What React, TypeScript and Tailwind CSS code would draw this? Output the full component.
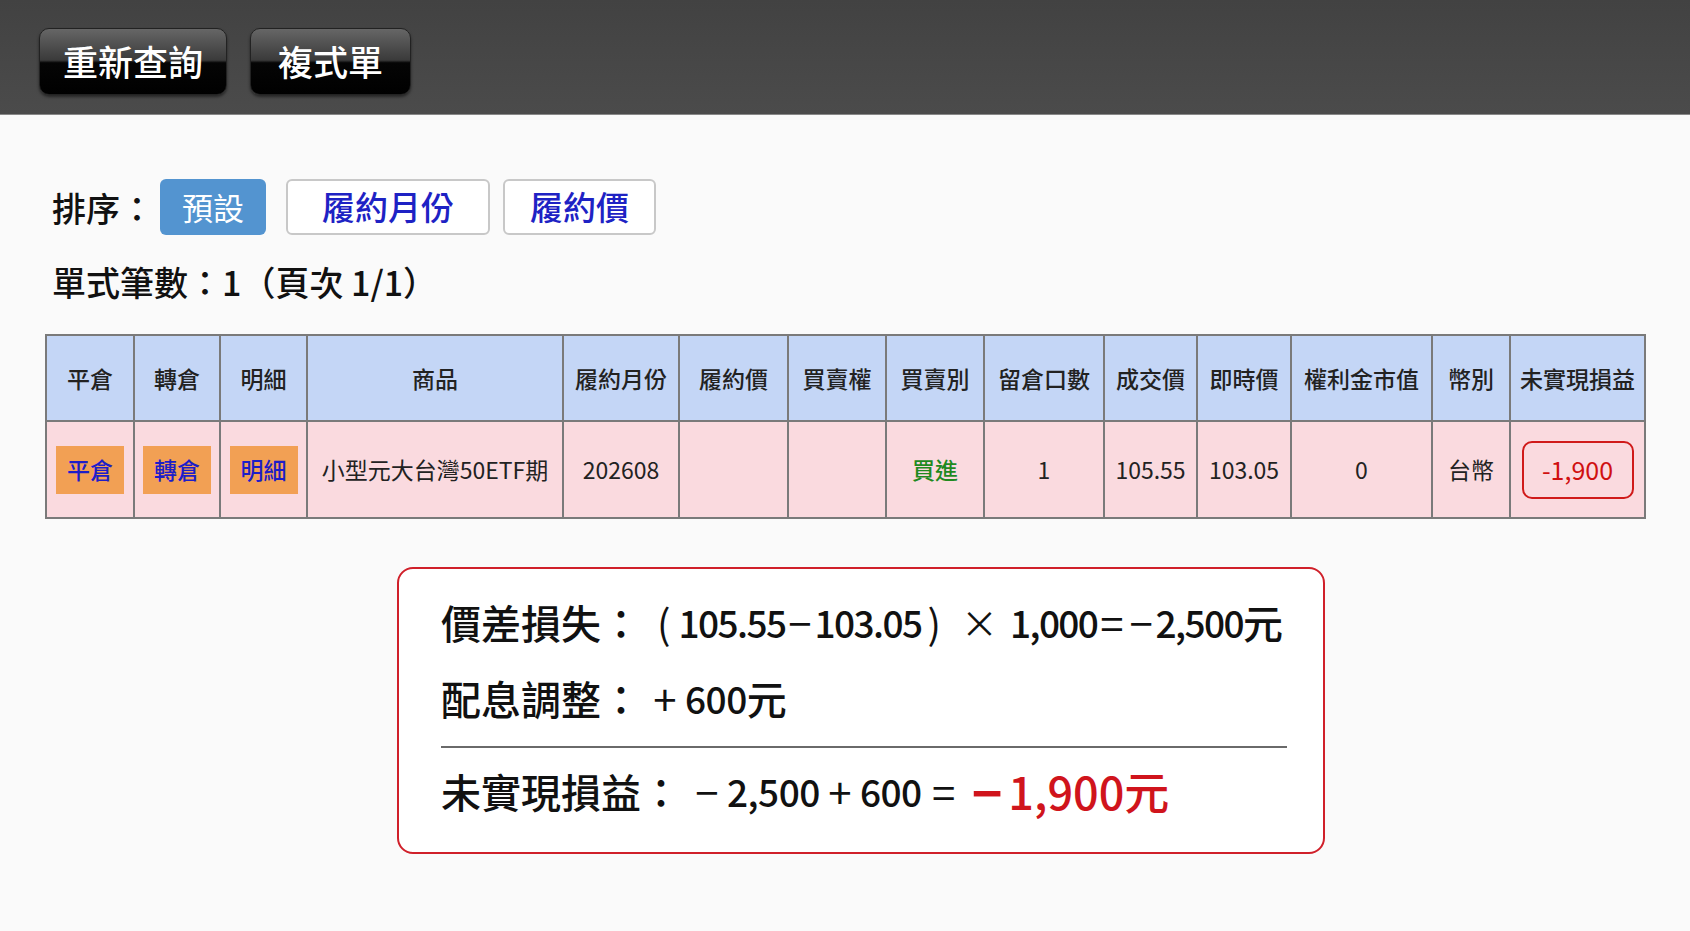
import React from "react";

const font = { fontFamily: '"Noto Sans CJK TC", "Noto Sans", sans-serif' };

const cols = [88, 86, 87, 256, 116, 109, 98, 98, 120, 93, 94, 141, 78, 135];
const heads = ["平倉", "轉倉", "明細", "商品", "履約月份", "履約價", "買賣權", "買賣別", "留倉口數", "成交價", "即時價", "權利金市值", "幣別", "未實現損益"];

function OrangeBtn({ t }: { t: string }) {
  return (
    <div className="mx-auto flex h-[48px] w-[68px] items-center justify-center bg-[#f2a054] text-[23px] font-medium text-[#1d1dc8]">
      {t}
    </div>
  );
}

function N({ children, tight }: { children: React.ReactNode; tight?: boolean }) {
  return <span className={tight ? "text-[37px] tracking-[-1.6px]" : "text-[37px] tracking-[-0.5px]"}>{children}</span>;
}

function Op({ children, w }: { children: React.ReactNode; w?: string }) {
  return <span className={"inline-flex justify-center text-[42px] font-normal " + (w ?? "w-[40px]")}>{children}</span>;
}

export default function App() {
  return (
    <div className="min-h-[931px] w-[1690px] bg-[#fafafa] text-[#111]" style={font}>
      <div className="flex h-[115px] items-start gap-[23px] border-b border-[#888] bg-gradient-to-b from-[#424242] to-[#4b4b4b] pl-[39px] pt-[28px]">
        <div className="flex h-[67px] w-[188px] items-center justify-center rounded-[10px] border border-[#222] bg-[linear-gradient(to_bottom,#666_0%,#3a3a3a_48%,#050505_52%,#000_100%)] text-[35px] font-medium text-white shadow-[0_2px_3px_rgba(0,0,0,0.5)]">
          重新查詢
        </div>
        <div className="flex h-[67px] w-[161px] items-center justify-center rounded-[10px] border border-[#222] bg-[linear-gradient(to_bottom,#666_0%,#3a3a3a_48%,#050505_52%,#000_100%)] text-[35px] font-medium text-white shadow-[0_2px_3px_rgba(0,0,0,0.5)]">
          複式單
        </div>
      </div>

      <div className="pl-[52px] pt-[64px]">
        <div className="flex h-[56px] items-center">
          <span className="w-[108px] text-[34px] font-medium">排序：</span>
          <div className="flex h-[56px] w-[106px] items-center justify-center rounded-[6px] bg-[#5394d0] text-[31px] text-white">預設</div>
          <div className="ml-[20px] flex h-[56px] w-[204px] items-center justify-center rounded-[6px] border-2 border-[#c8c8c8] bg-white text-[33px] font-medium text-[#1e22c4]">履約月份</div>
          <div className="ml-[13px] flex h-[56px] w-[153px] items-center justify-center rounded-[6px] border-2 border-[#c8c8c8] bg-white text-[33px] font-medium text-[#1e22c4]">履約價</div>
        </div>
        <div className="mt-[27px] h-[40px] whitespace-nowrap text-[34px] font-medium leading-[40px]">單式筆數：1（頁次 1/1）</div>
      </div>

      <div className="ml-[45px] mt-[32px]">
        <table className="border-collapse text-[23px]" style={{ width: 1599, tableLayout: "fixed" }}>
          <colgroup>
            {cols.map((w, i) => (
              <col key={i} style={{ width: w }} />
            ))}
          </colgroup>
          <thead>
            <tr className="h-[86px] bg-[#c4d6f6]">
              {heads.map((h) => (
                <th key={h} className="border-2 border-[#7a7a7a] p-0 text-center font-medium text-[#222]">
                  {h}
                </th>
              ))}
            </tr>
          </thead>
          <tbody>
            <tr className="h-[97px] bg-[#fadadf] text-[#222]">
              <td className="border-2 border-[#7a7a7a] p-0"><OrangeBtn t="平倉" /></td>
              <td className="border-2 border-[#7a7a7a] p-0"><OrangeBtn t="轉倉" /></td>
              <td className="border-2 border-[#7a7a7a] p-0"><OrangeBtn t="明細" /></td>
              <td className="border-2 border-[#7a7a7a] p-0 text-center">小型元大台灣50ETF期</td>
              <td className="border-2 border-[#7a7a7a] p-0 text-center">202608</td>
              <td className="border-2 border-[#7a7a7a] p-0"></td>
              <td className="border-2 border-[#7a7a7a] p-0"></td>
              <td className="border-2 border-[#7a7a7a] p-0 text-center font-medium text-[#1f8a1f]">買進</td>
              <td className="border-2 border-[#7a7a7a] p-0 text-center">1</td>
              <td className="border-2 border-[#7a7a7a] p-0 text-center">105.55</td>
              <td className="border-2 border-[#7a7a7a] p-0 text-center">103.05</td>
              <td className="border-2 border-[#7a7a7a] p-0 text-center">0</td>
              <td className="border-2 border-[#7a7a7a] p-0 text-center">台幣</td>
              <td className="border-2 border-[#7a7a7a] p-0">
                <div className="mx-auto flex h-[58px] w-[112px] items-center justify-center rounded-[10px] border-2 border-[#d01a1a] text-[25px] text-[#d01010]">
                  -1,900
                </div>
              </td>
            </tr>
          </tbody>
        </table>
      </div>

      <div className="ml-[397px] mt-[48px] w-[928px] rounded-[16px] border-2 border-[#d0202a] bg-white pb-[33px] pl-[42px] pr-[40px] pt-[29px] font-medium">
        <div className="flex h-[48px] items-center whitespace-nowrap text-[40px] leading-[48px]">
          <span>價差損失：</span>
          <span className="ml-[16px] mr-[8px] text-[40px] font-normal">(</span>
          <N tight>105.55</N>
          <Op>−</Op>
          <N tight>103.05</N>
          <span className="ml-[6px] mr-[20px] text-[40px] font-normal">)</span>
          <span className="mr-[12px] text-[37px] font-normal">×</span>
          <N tight>1,000</N>
          <Op>=</Op>
          <Op>−</Op>
          <N tight>2,500</N>
          <span>元</span>
        </div>
        <div className="mt-[28px] flex h-[48px] items-center whitespace-nowrap text-[40px] leading-[48px]">
          <span>配息調整：</span>
          <span className="ml-[4px]"><Op>+</Op></span>
          <N>600</N>
          <span>元</span>
        </div>
        <div className="mt-[24px] h-[2px] w-[846px] bg-[#6a6a6a]"></div>
        <div className="mt-[15px] flex h-[56px] items-center whitespace-nowrap text-[40px] leading-[56px]">
          <span>未實現損益：</span>
          <span className="ml-[6px]"><Op>−</Op></span>
          <N>2,500</N>
          <Op>+</Op>
          <N>600</N>
          <Op w="w-[44px]">=</Op>
          <span className="ml-[6px] inline-flex items-center text-[45px] text-[#d0141c]">
            <span className="mr-[6px] text-[52px] font-semibold">−</span>
            <span>1,900元</span>
          </span>
        </div>
      </div>
    </div>
  );
}
